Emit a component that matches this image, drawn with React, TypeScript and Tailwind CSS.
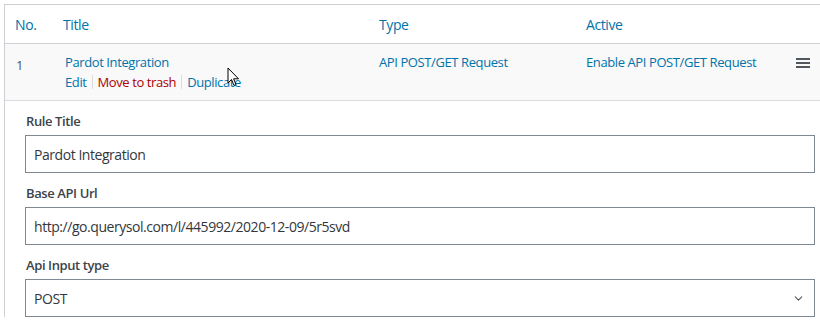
import { ChevronDown } from "lucide-react";

const font = { fontFamily: "'Open Sans', 'Noto Sans', sans-serif" };

function Cursor() {
  return (
    <svg
      className="absolute left-[227px] top-[67px]"
      width="13"
      height="21"
      viewBox="0 0 13 21"
    >
      <path
        d="M1 1 L1 16 L4.5 12.5 L7 18.5 L9 17.6 L6.6 11.8 L11.5 11.8 Z"
        fill="#fff"
        stroke="#000"
        strokeWidth="1"
        strokeLinejoin="round"
      />
    </svg>
  );
}

function Field({ label, value, select }: { label: string; value: string; select?: boolean }) {
  return (
    <div className="mb-[10px]">
      <div className="text-[13px] leading-[20px] font-semibold tracking-[-0.4px] text-[#3c434a] pl-[1px] mb-[4px]">{label}</div>
      <div className="relative w-[790px] h-[38px] border border-[#7e8993] bg-white flex items-center pl-[8px] text-[14px] tracking-[-0.45px] text-[#32373c]">
        {value}
        {select && (
          <ChevronDown className="absolute right-[9px] top-[12px] w-[13px] h-[13px] text-[#50575e]" strokeWidth={2} />
        )}
      </div>
    </div>
  );
}

export default function App() {
  return (
    <div className="relative w-[820px] h-[323px] overflow-hidden bg-white pt-[4px] pl-[4px]" style={font}>
      <div className="w-[850px] border-l border-t border-[#ccd0d4]">
        {/* header */}
        <div className="flex items-center h-[39px] border-b border-[#ccd0d4] text-[14px] tracking-[-0.4px] text-[#0073aa]">
          <div className="w-[58px] pl-[10px]">No.</div>
          <div className="w-[316px]">Title</div>
          <div className="w-[207px]">Type</div>
          <div className="w-[210px]">Active</div>
        </div>

        {/* row */}
        <div className="flex h-[57px] bg-[#f9f9f9] border-b border-[#dcdcde] text-[13px] leading-[20px] tracking-[-0.4px]">
          <div className="w-[58px] pl-[11px] pt-[11px] text-[#50575e]">1</div>
          <div className="w-[316px] pt-[8px] pl-[2px]">
            <div className="text-[#0073aa]">Pardot Integration</div>
            <div className="flex items-center">
              <span className="text-[#0073aa]">Edit</span>
              <span className="mx-[5px] w-px h-[14px] bg-[#dcdcde]" />
              <span className="text-[#a00]">Move to trash</span>
              <span className="mx-[5px] w-px h-[14px] bg-[#dcdcde]" />
              <span className="text-[#0073aa]">Duplicate</span>
            </div>
          </div>
          <div className="w-[207px] pt-[8px] text-[#0073aa]">API POST/GET Request</div>
          <div className="w-[210px] pt-[8px] text-[#0073aa]">Enable API POST/GET Request</div>
          <div className="pt-[14px]">
            <div className="flex flex-col gap-[2px] w-[14px]">
              <span className="h-[2px] bg-[#50575e]" />
              <span className="h-[2px] bg-[#50575e]" />
              <span className="h-[2px] bg-[#50575e]" />
            </div>
          </div>
        </div>

        {/* expanded form */}
        <div className="pl-[20px] pt-[10px]">
          <Field label="Rule Title" value="Pardot Integration" />
          <Field label="Base API Url" value="http://go.querysol.com/l/445992/2020-12-09/5r5svd" />
          <Field label="Api Input type" value="POST" select />
        </div>
      </div>
      <Cursor />
    </div>
  );
}
